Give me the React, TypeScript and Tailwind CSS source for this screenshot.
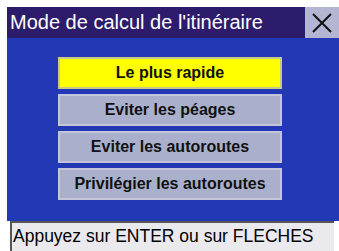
export default function App() {
  const options = [
    "Le plus rapide",
    "Eviter les péages",
    "Eviter les autoroutes",
    "Privilégier les autoroutes",
  ];
  return (
    <div className="w-[339px] h-[251px] bg-white pt-[7px] pl-[7px] overflow-hidden font-['Liberation_Sans',Arial,sans-serif]">
      <div className="flex h-[31px]">
        <div className="flex-1 bg-[#2d1b6b] text-white text-[20px] leading-[31px] pl-[3px]">
          Mode de calcul de l'itinéraire
        </div>
        <div className="w-[34px] bg-[#b3b5d3] flex items-center justify-center">
          <svg width="22" height="22" viewBox="0 0 22 22">
            <path d="M2 2 L20 20 M20 2 L2 20" stroke="#111" strokeWidth="2" fill="none" />
          </svg>
        </div>
      </div>
      <div className="h-[183px] bg-[#2338b4] pt-[19px] pl-[51px] flex flex-col gap-[5px]">
        {options.map((o, i) => (
          <div
            key={o}
            className={
              "w-[224px] h-[32px] border-2 flex items-center justify-center text-[16px] font-bold text-[#111] " +
              (i === 0
                ? "bg-[#ffff00] border-[#c9c98a]"
                : "bg-[#aab0cb] border-[#c2c6d8]")
            }
          >
            {o}
          </div>
        ))}
      </div>
      <div className="h-[30px] ml-[3px] w-[324px] bg-[#e9e9ee] border-t-2 border-l-2 border-[#555] text-[17.5px] leading-[27px] pl-[1px] text-black">
        Appuyez sur ENTER ou sur FLECHES
      </div>
    </div>
  );
}
